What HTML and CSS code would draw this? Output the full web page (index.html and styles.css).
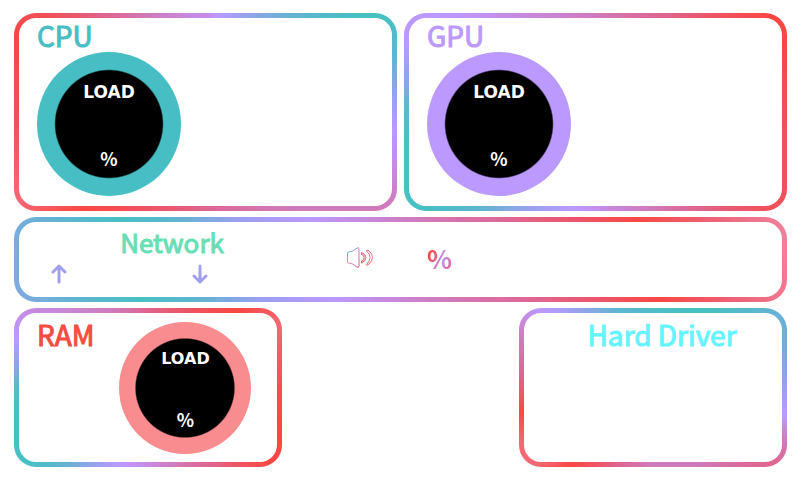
FILE: index.html
```html
<!DOCTYPE html>
<html lang="en">
<head>
<meta charset="utf-8">
<title>System Monitor</title>
<link rel="stylesheet" href="styles.css">
</head>
<body>
<main class="dashboard">
  <div class="row row-top">
    <section class="card card-cpu">
      <h2 class="title">CPU</h2>
      <div class="gauge gauge-large"><span class="load">LOAD</span><span class="unit">%</span></div>
    </section>
    <section class="card card-gpu">
      <h2 class="title">GPU</h2>
      <div class="gauge gauge-large"><span class="load">LOAD</span><span class="unit">%</span></div>
    </section>
  </div>
  <section class="card card-network">
    <div class="traffic">
      <h2 class="title title-network">Network</h2>
      <div class="arrows">
        <svg class="arrow" viewBox="0 0 16 20"><path d="M8 18V2M2 8l6-6 6 6"/></svg>
        <svg class="arrow" viewBox="0 0 16 20"><path d="M8 2v16M2 12l6 6 6-6"/></svg>
      </div>
    </div>
    <div class="volume">
      <svg class="speaker" viewBox="0 0 28 24">
        <defs>
          <linearGradient id="horn" x1="0" y1="0" x2="1" y2="1">
            <stop offset="0" stop-color="#47c0c4"/>
            <stop offset=".3" stop-color="#80a8e0"/>
            <stop offset=".5" stop-color="#c489dc"/>
            <stop offset="1" stop-color="#ec5068"/>
          </linearGradient>
          <linearGradient id="wave" x1="0" y1="0" x2="0" y2="1">
            <stop offset="0" stop-color="#e96078"/>
            <stop offset=".5" stop-color="#dc7898"/>
            <stop offset="1" stop-color="#fa4744"/>
          </linearGradient>
        </defs>
        <path d="M1.500 7Q1.500 6 2.500 6Q7 6 11 2Q13 1 13 3V20Q13 22 11 21Q7 17 2.500 17Q1.500 17 1.500 16Z" fill="none" stroke="url(#horn)"/>
        <path d="M15.500 6.500Q20 8 20 11.500T15.500 17V15Q18 14 18 11.500T15.500 8.500Z" fill="#e9607866" stroke="url(#wave)"/>
        <path d="M20.500 4.500Q22 4 23 5Q26.500 8 26.500 11.500T22.500 18.500Q20.500 20 20.500 18.500Q24 15 24 11.500T20.500 5Z" fill="none" stroke="url(#wave)"/>
      </svg>
      <span class="volume-unit">%</span>
    </div>
  </section>
  <div class="row row-bottom">
    <section class="card card-ram">
      <h2 class="title">RAM</h2>
      <div class="gauge gauge-small"><span class="load">LOAD</span><span class="unit">%</span></div>
    </section>
    <section class="card card-disk">
      <h2 class="title">Hard Driver</h2>
    </section>
  </div>
</main>
</body>
</html>
```

FILE: styles.css
```css
:root {
  --teal: #47c0c4;
  --sky: #5fb5d0;
  --blue: #8fa5e8;
  --purple: #bb99ff;
  --orchid: #c68ae2;
  --pink: #d07abc;
  --rose: #e0648e;
  --coral: #f05058;
  --red: #fa4744;
  --salmon: #f46874;
}

* { box-sizing: border-box; }

body {
  margin: 0;
  padding: 13px 14px;
  background: #fff;
  font-family: "Noto Sans CJK SC", "Noto Sans", sans-serif;
}

.dashboard { display: grid; gap: 6px; }

.row { display: grid; }
.row-top { grid-template-columns: 1fr 1fr; gap: 7px; }
.row-bottom {
  grid-template-columns: minmax(0, 268px) minmax(0, 268px);
  justify-content: space-between;
}

.card {
  --edge: conic-gradient(var(--red), var(--red));
  border: 5px solid transparent;
  border-radius: 22px;
  padding: 0 18px;
  background: linear-gradient(#fff, #fff) padding-box, var(--edge) border-box;
}

.title {
  margin: 0;
  font-size: 28px;
  line-height: 34px;
  font-weight: 400;
  -webkit-text-stroke: 1px currentColor;
}

.card-cpu {
  padding-bottom: 10px;
  color: #47bec3;
  --edge: conic-gradient(
    var(--orchid) 0deg, var(--purple) 7deg, var(--blue) 25deg, var(--sky) 45deg,
    var(--teal) 57deg, var(--teal) 63deg, var(--sky) 72deg, var(--blue) 84deg,
    var(--purple) 95deg, var(--orchid) 106deg, var(--pink) 117deg, var(--pink) 138deg,
    var(--rose) 183deg, var(--red) 232deg, var(--salmon) 245deg, var(--coral) 268deg,
    var(--red) 291deg, var(--coral) 302deg, var(--rose) 313deg, var(--pink) 330deg,
    var(--orchid) 350deg, var(--orchid) 360deg);
}

.card-gpu {
  padding-bottom: 10px;
  color: #bb99ff;
  --edge: conic-gradient(
    var(--pink) 0deg, var(--rose) 38deg, var(--red) 61deg, var(--red) 70deg,
    var(--coral) 95deg, var(--coral) 119deg, var(--rose) 132deg, var(--pink) 150deg,
    var(--orchid) 175deg, var(--purple) 193deg, var(--blue) 219deg, var(--sky) 230deg,
    var(--teal) 240deg, var(--teal) 260deg, var(--sky) 271deg, var(--blue) 281deg,
    var(--purple) 290deg, var(--purple) 300deg, var(--orchid) 320deg, var(--pink) 360deg);
}

.gauge {
  display: flex;
  flex-direction: column;
  align-items: center;
  justify-content: space-between;
  border-radius: 50%;
  background: radial-gradient(circle closest-side, #000 74%, currentColor 76%);
}
.gauge-large { width: 144px; height: 144px; padding: 31px 0 28px; }
.gauge-small { width: 132px; height: 132px; padding: 28px 0 25px; color: #f88c8f; }

.load, .unit { color: #fff; font-weight: 700; }
.load { font-family: "DejaVu Sans", sans-serif; font-size: 17px; line-height: 18px; }
.unit { font-size: 18px; line-height: 20px; }
.gauge-small .load { font-size: 16px; }

.card-network {
  display: flex;
  min-height: 85px;
  --edge: linear-gradient(74deg,
    #82a9e2 0%, var(--sky) 9%, var(--teal) 16%, var(--sky) 23%, #9a9ff0 31%,
    var(--purple) 40%, var(--orchid) 46%, var(--pink) 54%, var(--rose) 66%,
    var(--red) 81%, #ee6074 90%, #f0839b 100%);
}
.traffic { width: 270px; }
.title-network { font-size: 26px; line-height: 40px; color: #68deb5; text-align: center; }
.arrows { display: flex; justify-content: space-between; padding: 2px 99px 0 14px; }
.arrow {
  width: 16px;
  height: 20px;
  fill: none;
  stroke: #a0a0ef;
  stroke-width: 3;
  stroke-linecap: round;
  stroke-linejoin: round;
}
.volume { display: flex; align-items: center; gap: 53px; margin-left: 39px; padding-bottom: 4px; }
.speaker { width: 28px; height: 24px; }
.volume-unit {
  font-size: 26px;
  line-height: 36px;
  font-weight: 700;
  color: transparent;
  background: linear-gradient(110deg, #fa4744 20%, #e0648e 42%, #bb99ff 60%, #d07abc 75%, #e96078 95%);
  background-clip: text;
}

.card-ram, .card-disk { min-height: 159px; }
.card-disk .title { line-height: 42px; }

.card-ram {
  display: flex;
  gap: 25px;
  color: #f34d43;
  padding-top: 9px;
  --edge: conic-gradient(
    var(--rose) 0deg, var(--coral) 35deg, var(--red) 50deg, var(--salmon) 64deg,
    var(--coral) 90deg, var(--red) 108deg, var(--red) 122deg, var(--rose) 140deg,
    var(--pink) 160deg, var(--orchid) 180deg, var(--purple) 201deg, var(--blue) 218deg,
    var(--sky) 229deg, var(--teal) 238deg, var(--teal) 258deg, var(--sky) 270deg,
    var(--blue) 281deg, var(--purple) 291deg, var(--orchid) 303deg, var(--pink) 335deg,
    var(--rose) 360deg);
}
.card-ram .title { line-height: 24px; }

.card-disk {
  padding-right: 0;
  text-align: center;
  color: #65f3ff;
  --edge: conic-gradient(
    #50bcc9 0deg, var(--teal) 25deg, var(--teal) 40deg, var(--sky) 54deg,
    #76abde 74deg, #9a9ff0 90deg, var(--purple) 102deg, var(--pink) 112deg,
    var(--rose) 122deg, var(--pink) 149deg, var(--pink) 182deg, var(--rose) 205deg,
    var(--red) 227deg, var(--salmon) 236deg, var(--salmon) 248deg, var(--red) 259deg,
    var(--rose) 275deg, var(--pink) 290deg, var(--orchid) 298deg, var(--purple) 305deg,
    var(--blue) 318deg, var(--sky) 335deg, #50bcc9 360deg);
}
```
